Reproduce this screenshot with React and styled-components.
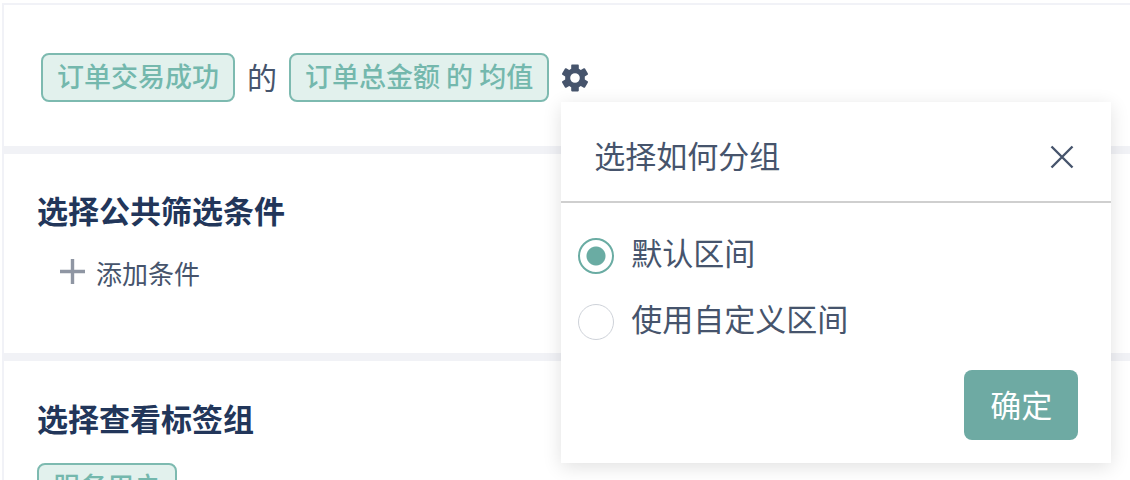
import React, { useState } from "react";
import styled, { createGlobalStyle } from "styled-components";

const GlobalStyle = createGlobalStyle`
  *, *::before, *::after { box-sizing: border-box; }
  body {
    margin: 0;
    background: #fff;
    color: #46546c;
    font-family: "Noto Sans CJK SC", "Noto Sans", sans-serif;
    overflow: hidden;
  }
  button, input { font: inherit; color: inherit; }
`;

const Page = styled.main`
  margin: 3px 0 0 2px;
  border-top: 2px solid #f1f2f7;
  border-left: 2px solid #f1f2f7;
`;

const Section = styled.section`
  padding: 0 33px;
  border-bottom: 8px solid #f1f2f6;
`;

const MetricSection = styled(Section)`
  padding: 48px 37px 44px;
`;

const FilterSection = styled(Section)`
  padding-top: 34px;
  padding-bottom: 61px;
`;

const GroupSection = styled(Section)`
  padding-top: 35px;
  padding-bottom: 40px;
`;

const MetricRow = styled.div`
  display: flex;
  align-items: center;
  gap: 12px;
`;

const Tag = styled.button`
  height: 49px;
  padding: 0 14px 3px;
  border: 2px solid #7dbab0;
  border-radius: 8px;
  background: #e2f1ed;
  color: #74b8ad;
  font-size: 27px;
  font-weight: 500;
  line-height: 40px;
  white-space: nowrap;
`;

const Joiner = styled.span`
  padding-bottom: 4px;
  font-size: 30px;
  line-height: 44px;
`;

const GearAnchor = styled.div`
  position: relative;
  display: flex;
`;

const IconButton = styled.button`
  display: flex;
  padding: 0;
  border: 0;
  background: none;
  color: #46546c;
`;

const Heading = styled.h2`
  margin: 0;
  color: #22365a;
  font-size: 31px;
  font-weight: 700;
  line-height: 44px;
`;

const AddButton = styled.button`
  display: flex;
  align-items: center;
  gap: 10px;
  margin-top: 18px;
  padding: 0 0 0 22px;
  border: 0;
  background: none;
  font-size: 26px;
  line-height: 42px;
  svg { color: #8f96a3; }
`;

const AddLabel = styled.span`
  padding-top: 4px;
  line-height: 38px;
`;

const TagRow = styled.div`
  display: flex;
  margin-top: 23px;
`;

const Popover = styled.form`
  position: absolute;
  top: 38px;
  left: 0;
  z-index: 1;
  width: 550px;
  background: #fff;
  box-shadow: 0 4px 18px rgba(0, 0, 0, 0.12);
  font-size: 31px;
`;

const PopoverHeader = styled.header`
  display: flex;
  align-items: center;
  justify-content: space-between;
  padding: 31px 36px 24px 33px;
  border-bottom: 2px solid #cfcfcf;
`;

const PopoverTitle = styled.h3`
  margin: 0;
  font-size: 31px;
  font-weight: 400;
  line-height: 44px;
`;

const CloseButton = styled(IconButton)`
  padding-top: 4px;
`;

const Options = styled.div`
  display: grid;
  gap: 22px;
  padding: 27px 18px 0 17px;
`;

const Option = styled.label`
  display: flex;
  align-items: center;
  gap: 17px;
  line-height: 44px;
`;

const Radio = styled.input`
  appearance: none;
  flex: none;
  width: 36px;
  height: 36px;
  margin: 8px 0 0;
  border: 1px solid #ced2d9;
  border-radius: 50%;
  background: #fff;
  &:checked {
    border: 2px solid #6aaca3;
    background: radial-gradient(circle, #6aaca3 9px, #fff 10px);
  }
`;

const PopoverFooter = styled.footer`
  display: flex;
  justify-content: flex-end;
  padding: 30px 33px 23px;
`;

const ConfirmButton = styled.button`
  height: 70px;
  padding: 0 26px 2px;
  border: 0;
  border-radius: 8px;
  background: #6eaaa3;
  color: #fff;
  line-height: 44px;
`;

function GearIcon() {
  return (
    <svg width="28" height="28" viewBox="0 0 28 28" fill="currentColor" aria-hidden="true">
      <path
        fillRule="evenodd"
        d="M11 0.6h6q.8 0 .8.8v3.4l2 1.1 3-1.6q.8-.4 1.2.3l2.9 5q.4.7-.3 1.1l-2.8 1.7v3.2l2.8 1.7q.7.4.3 1.1l-2.9 5q-.4.7-1.2.3l-3-1.6-2 1.1v3.4q0 .8-.8.8h-6q-.8 0-.8-.8v-3.4l-2-1.1-3 1.6q-.8.4-1.2-.3l-2.9-5q-.4-.7.3-1.1l2.8-1.7v-3.2l-2.8-1.7q-.7-.4-.3-1.1l2.9-5q.4-.7 1.2-.3l3 1.6 2-1.1v-3.4q0-.8.8-.8zM14 9.2a4.8 4.8 0 1 0 0 9.6a4.8 4.8 0 1 0 0-9.6z"
      />
    </svg>
  );
}

function CloseIcon() {
  return (
    <svg width="26" height="26" viewBox="0 0 26 26" stroke="currentColor" strokeWidth="2.4" aria-hidden="true">
      <path d="M2.5 2.5l21 21M23.5 2.5l-21 21" />
    </svg>
  );
}

function PlusIcon() {
  return (
    <svg width="27" height="27" viewBox="0 0 27 27" stroke="currentColor" strokeWidth="3.4" aria-hidden="true">
      <path d="M13.5 1v25M1 13.5h25" />
    </svg>
  );
}

const CHOICES = [
  { value: "default", label: "默认区间" },
  { value: "custom", label: "使用自定义区间" },
];

function GroupingPopover() {
  const [choice, setChoice] = useState("default");
  return (
    <Popover onSubmit={(e) => e.preventDefault()}>
      <PopoverHeader>
        <PopoverTitle>选择如何分组</PopoverTitle>
        <CloseButton type="button" aria-label="关闭"><CloseIcon /></CloseButton>
      </PopoverHeader>
      <Options>
        {CHOICES.map(({ value, label }) => (
          <Option key={value}>
            <Radio
              type="radio"
              name="grouping"
              value={value}
              checked={choice === value}
              onChange={() => setChoice(value)}
            />
            {label}
          </Option>
        ))}
      </Options>
      <PopoverFooter>
        <ConfirmButton type="submit">确定</ConfirmButton>
      </PopoverFooter>
    </Popover>
  );
}

export default function App() {
  return (
    <>
      <GlobalStyle />
      <Page>
        <MetricSection>
          <MetricRow>
            <Tag type="button">订单交易成功</Tag>
            <Joiner>的</Joiner>
            <Tag type="button">订单总金额 的 均值</Tag>
            <GearAnchor>
              <IconButton type="button" aria-label="设置"><GearIcon /></IconButton>
              <GroupingPopover />
            </GearAnchor>
          </MetricRow>
        </MetricSection>
        <FilterSection>
          <Heading>选择公共筛选条件</Heading>
          <AddButton type="button"><PlusIcon /><AddLabel>添加条件</AddLabel></AddButton>
        </FilterSection>
        <GroupSection>
          <Heading>选择查看标签组</Heading>
          <TagRow><Tag type="button">服务用户</Tag></TagRow>
        </GroupSection>
      </Page>
    </>
  );
}
